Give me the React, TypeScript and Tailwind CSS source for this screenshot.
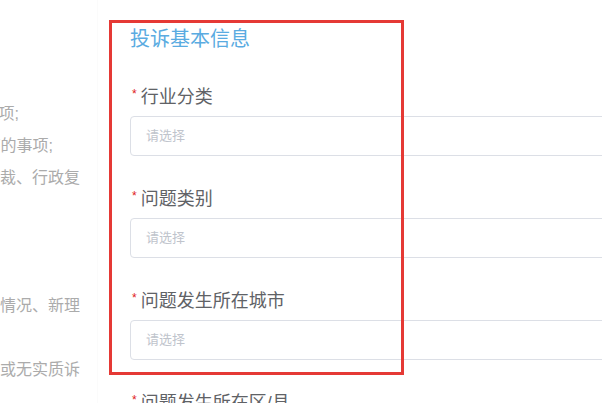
import React from "react";

const leftLines: { text: string; pad: string }[] = [
  { text: "（一）涉及国家秘密的事项;", pad: "pr-[61px]" },
  { text: "（二）已进入诉讼程序的事项;", pad: "pr-[27px]" },
  { text: "（三）已经或依法应当通过诉讼、仲裁、行政复", pad: "pr-0" },
  { text: "", pad: "pr-0" },
  { text: "", pad: "pr-0" },
  { text: "", pad: "pr-0" },
  { text: "（四）反映的问题未提供具体情况、新理", pad: "pr-0" },
  { text: "", pad: "pr-0" },
  { text: "（五）重复投诉且无新证据或无实质诉", pad: "pr-0" },
];

const fields = ["行业分类", "问题类别", "问题发生所在城市", "问题发生所在区/县"];

const FormItem = ({ label, first }: { label: string; first?: boolean }) => (
  <div className={first ? "mt-[32px]" : "mt-[31px]"}>
    <div className="h-[24px] leading-[24px] flex items-center text-[18px] text-[#606266]">
      <span className="ml-[2px] text-[12px] text-[#e02020] mr-[4px] -mt-[6px]">*</span>
      <span>{label}</span>
    </div>
    <div className="mt-[7px] h-[40px] w-[520px] border border-[#dcdfe6] rounded-[4px] pl-[15px] flex items-center text-[13px] text-[#c0c4cc]">
      请选择
    </div>
  </div>
);

export default function App() {
  return (
    <div className="relative w-[602px] h-[403px] overflow-hidden bg-white flex font-['Liberation_Sans','Noto_Sans_CJK_SC',sans-serif]">
      <div className="w-[98px] shrink-0 border-r border-[#fbfbfb]">
        <div className="w-[80px] pt-[98px] flex flex-col">
          {leftLines.map((l, i) => (
            <div
              key={i}
              className={`h-[32px] leading-[32px] flex justify-end overflow-hidden whitespace-nowrap text-[16px] text-[#ababab] ${l.pad}`}
            >
              {l.text}
            </div>
          ))}
        </div>
      </div>

      <div className="pl-[32px] pt-[25px] shrink-0">
        <h3 className="text-[20px] leading-[28px] text-[#5aabe1]">投诉基本信息</h3>
        {fields.map((f, i) => (
          <FormItem key={f} label={f} first={i === 0} />
        ))}
      </div>

      <div className="absolute left-[109px] top-[20px] w-[295px] h-[355px] border-[3px] border-[#e53935]" />
    </div>
  );
}
